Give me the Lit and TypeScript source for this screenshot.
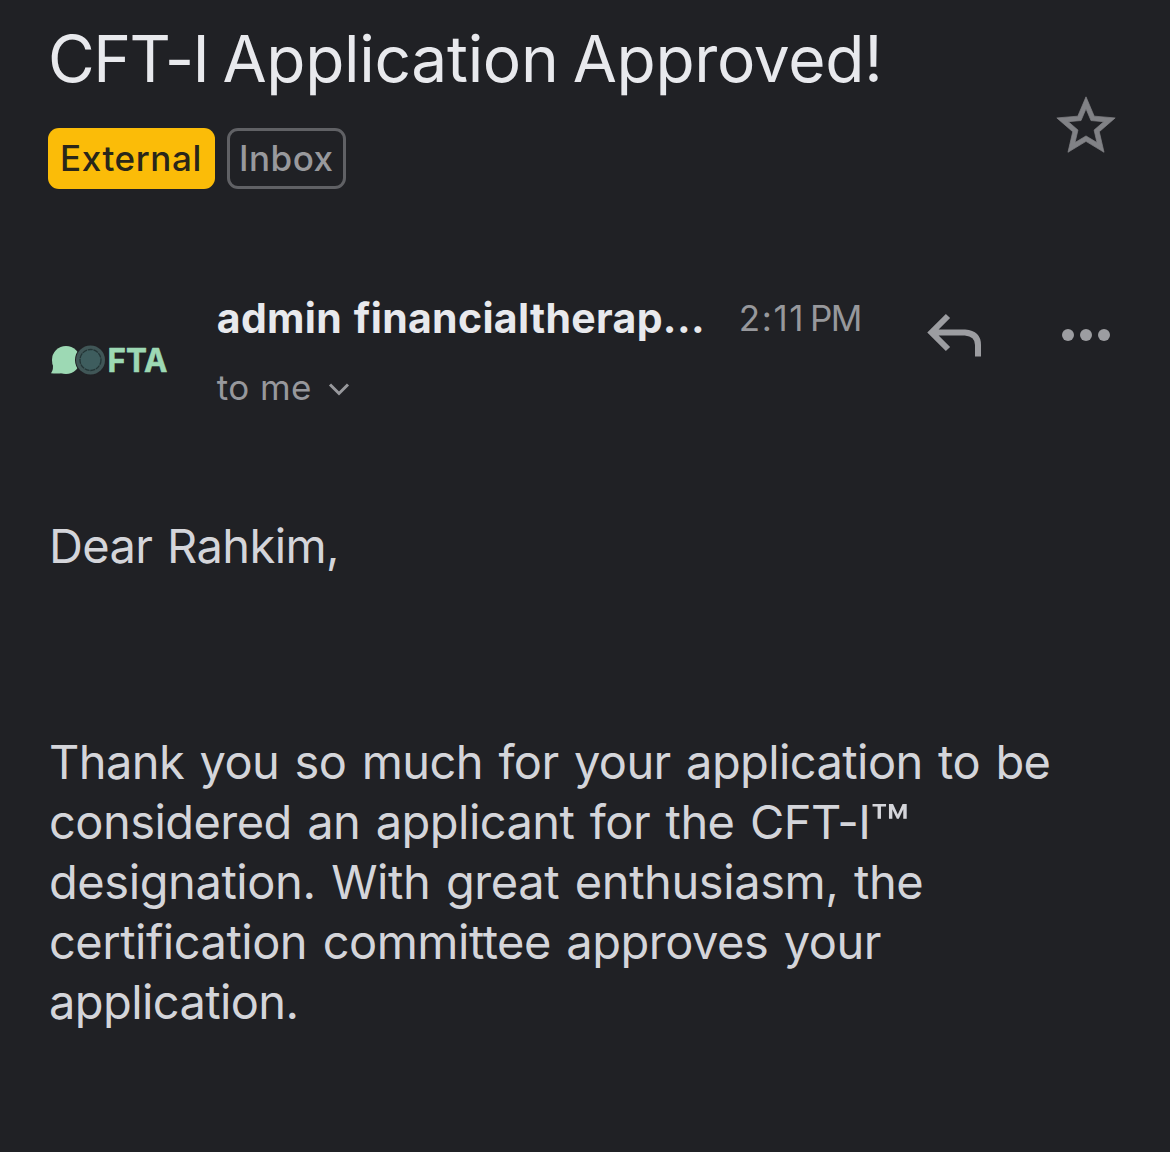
import { LitElement, html, css } from 'lit';
import { customElement, property } from 'lit/decorators.js';
import { classMap } from 'lit/directives/class-map.js';
import { styleMap } from 'lit/directives/style-map.js';

export type LabelKind = 'external' | 'inbox';

@customElement('mail-label')
export class MailLabel extends LitElement {
  static styles = css`
    :host {
      display: block;
    }

    .label {
      box-sizing: border-box;
      height: 61px;
      border-radius: 11px;
      font-size: 35px;
      font-weight: 500;
      line-height: 61px;
      white-space: nowrap;
    }

    .label--external {
      width: 167px;
      padding-left: 12px;
      background: #fbbc08;
      color: #29261a;
      letter-spacing: 0.6px;
    }

    .label--inbox {
      width: 119px;
      padding-left: 9px;
      border: 3px solid #606165;
      color: #98999d;
      line-height: 55px;
      letter-spacing: 0.5px;
    }
  `;

  @property({ type: String }) kind: LabelKind = 'inbox';

  @property({ type: String }) text = '';

  render() {
    const classes = { label: true, [`label--${this.kind}`]: true };
    return html`<div class=${classMap(classes)}>${this.text}</div>`;
  }
}

@customElement('sender-logo')
export class SenderLogo extends LitElement {
  static styles = css`
    :host {
      display: block;
    }

    .logo {
      display: block;
    }

    .name {
      font-family: Inter, sans-serif;
      font-size: 33px;
      font-weight: 700;
      stroke-linejoin: round;
    }
  `;

  render() {
    return html`
      <svg class="logo" width="140" height="40" viewBox="0 0 140 40">
        <circle cx="16" cy="20" r="14" fill="#9dd9b4" />
        <path d="M2.500 23Q4 29 1 33.200Q7 34 13 33z" fill="#9dd9b4" />
        <circle cx="40.500" cy="20" r="15.500" fill="#202125" />
        <circle cx="40.500" cy="20" r="14.500" fill="#405657" />
        <circle cx="40.500" cy="20" r="10.500" fill="#3e5d5e" stroke="#233536" stroke-width="1.300" stroke-dasharray="5 0.800" />
        <text
          class="name"
          x="57.500"
          y="32"
          textLength="60"
          lengthAdjust="spacingAndGlyphs"
          fill="#9dd9b4"
          stroke="#9dd9b4"
          stroke-width="0.600"
        >FTA</text>
      </svg>
    `;
  }
}

interface BodyLine {
  text: string;
  /** Letter spacing in pixels. */
  tracking: number;
  mark?: string;
}

const BODY_LINES: BodyLine[] = [
  { text: 'Thank you so much for your application to be', tracking: -0.6 },
  { text: 'considered an applicant for the CFT-I', tracking: -0.55, mark: '™' },
  { text: 'designation. With great enthusiasm, the', tracking: -0.42 },
  { text: 'certification committee approves your', tracking: -0.5 },
  { text: 'application.', tracking: -0.6 },
];

@customElement('app-root')
export class AppRoot extends LitElement {
  static styles = css`
    :host {
      display: block;
      box-sizing: border-box;
      width: 1170px;
      height: 1152px;
      overflow: hidden;
      background: #202125;
      color: #d4d5da;
      font-family: Inter, 'Liberation Sans', sans-serif;
    }

    .subject {
      display: flex;
      justify-content: space-between;
      height: 189px;
      padding: 0 49px 0 48px;
    }

    .title {
      height: 128px;
      margin: 0;
      color: #e8e9ed;
      font-size: 64px;
      font-weight: 400;
      line-height: 118px;
      letter-spacing: -0.3px;
      word-spacing: -3.5px;
      white-space: nowrap;
    }

    .title__code {
      letter-spacing: -1.5px;
    }

    .labels {
      display: flex;
      gap: 12px;
    }

    .star {
      display: block;
      margin-top: 91px;
      fill: #818286;
      stroke: #818286;
      stroke-width: 0.25;
    }

    .header {
      display: flex;
      height: 120px;
      padding: 101px 59px 0 50px;
    }

    .logo {
      width: 167px;
      padding-top: 50px;
    }

    .from {
      width: 710px;
    }

    .line {
      display: flex;
      align-items: flex-start;
      height: 56px;
      white-space: nowrap;
    }

    .sender {
      width: 522px;
      color: #e8e9ed;
      font-size: 41px;
      font-weight: 700;
      letter-spacing: 0.33px;
      line-height: 56px;
      word-spacing: 1.5px;
    }

    .time {
      color: #97989c;
      font-size: 35px;
      letter-spacing: -1.5px;
      line-height: 57px;
    }

    .time__digits {
      letter-spacing: 1.6px;
    }

    .recipient {
      display: flex;
      align-items: center;
      gap: 16px;
      height: 56px;
      margin-top: 13px;
      color: #97989c;
      font-size: 35px;
      letter-spacing: 0.4px;
      line-height: 56px;
    }

    .actions {
      display: flex;
      gap: 79px;
      padding-top: 23px;
    }

    .icon {
      display: block;
      fill: none;
      stroke: currentColor;
    }

    .actions .icon {
      color: #9c9da1;
    }

    .dots {
      display: block;
      fill: #9c9da1;
    }

    .body {
      padding: 106px 0 0 49px;
      font-size: 47px;
      line-height: 60px;
      white-space: nowrap;
      word-spacing: 2.8px;
    }

    .body p {
      height: 60px;
      margin: 0;
    }

    .body .greeting {
      height: 216px;
      letter-spacing: -0.6px;
      word-spacing: 2px;
    }

    .mark {
      display: inline-block;
      font-size: 56px;
      font-weight: 500;
      line-height: 0;
      transform: scaleX(1.14);
      transform-origin: left;
      vertical-align: -6px;
    }
  `;

  render() {
    return html`
      <section class="subject">
        <div>
          <h1 class="title"><span class="title__code">CFT-I</span> Application Approved!</h1>
          <div class="labels">
            <mail-label kind="external" text="External"></mail-label>
            <mail-label kind="inbox" text="Inbox"></mail-label>
          </div>
        </div>
        <svg class="star" width="70" height="70" viewBox="0 0 24 24">
          <path
            d="M22 9.240l-7.190-.620L12 2 9.190 8.630 2 9.240l5.460 4.730L5.820 21 12 17.270 18.180 21l-1.630-7.030L22 9.240zM12 15.400l-3.760 2.270 1-4.280-3.320-2.880 4.380-.380L12 6.100l1.710 4.040 4.380.380-3.320 2.880 1 4.280L12 15.400z"
          />
        </svg>
      </section>
      <section class="header">
        <div class="logo"><sender-logo></sender-logo></div>
        <div class="from">
          <div class="line">
            <span class="sender">admin financialtherap...</span>
            <span class="time"><span class="time__digits">2:11</span>&thinsp;PM</span>
          </div>
          <div class="recipient">
            <span>to me</span>
            <svg class="icon" width="22" height="18" viewBox="0 0 22 18" stroke-width="3">
              <path d="M2 6.500l9 9 9-9" />
            </svg>
          </div>
        </div>
        <div class="actions">
          <svg class="icon" width="56" height="44" viewBox="0 0 56 44" stroke-width="6">
            <path d="M22 3L5.500 19.500L22 36M6 19.500H39Q52 20.500 52 32V43.500" />
          </svg>
          <svg class="dots" width="50" height="44" viewBox="0 0 50 44">
            <circle cx="7" cy="22" r="6" />
            <circle cx="25" cy="22" r="6" />
            <circle cx="43" cy="22" r="6" />
          </svg>
        </div>
      </section>
      <section class="body">
        <p class="greeting">Dear Rahkim,</p>
        ${BODY_LINES.map(
          ({ text, tracking, mark }) => html`
            <p style=${styleMap({ letterSpacing: `${tracking}px` })}>${text}${mark
              ? html`<span class="mark">${mark}</span>`
              : ''}</p>
          `,
        )}
      </section>
    `;
  }
}

declare global {
  interface HTMLElementTagNameMap {
    'mail-label': MailLabel;
    'sender-logo': SenderLogo;
    'app-root': AppRoot;
  }
}
